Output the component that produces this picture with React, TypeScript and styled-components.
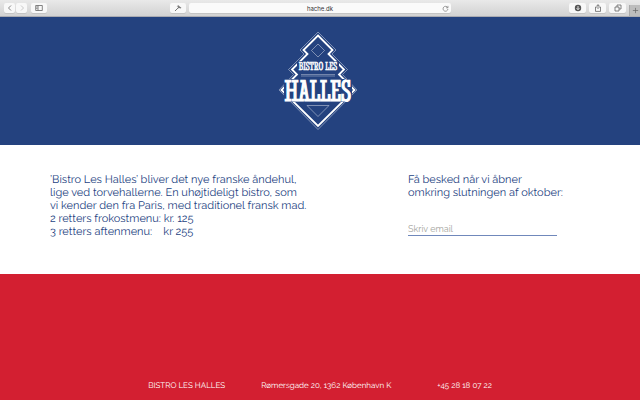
import React from "react";
import styled, { createGlobalStyle } from "styled-components";

const navy = "#24427f";
const sans = `Raleway, Lato, "Open Sans", sans-serif`;

const GlobalStyle = createGlobalStyle`
  * { box-sizing: border-box; }
  body { margin: 0; background: #fff; font-family: ${sans}; text-rendering: geometricPrecision; }
  p { margin: 0; }
`;

const Page = styled.div`
  min-height: 100vh;
  display: flex;
  flex-direction: column;
`;

const Toolbar = styled.header`
  height: 17px;
  display: grid;
  grid-template-columns: 1fr 262px 1fr;
  column-gap: 3px;
  align-items: center;
  background: linear-gradient(#e9e9e9, #d2d2d2);
  border-bottom: 1px solid #aaabb2;
`;

const ToolGroup = styled.div<{ $side: "left" | "right" }>`
  display: flex;
  align-items: center;
  justify-content: space-between;
  height: 100%;
  padding-left: ${(p) => (p.$side === "left" ? "4px" : "0")};
`;

const Buttons = styled.div<{ $gap: number; $push?: boolean }>`
  display: flex;
  align-items: center;
  gap: ${(p) => p.$gap}px;
  margin-left: ${(p) => (p.$push ? "auto" : "0")};
`;

const ToolButton = styled.button<{ $width: number }>`
  width: ${(p) => p.$width}px;
  height: 10px;
  padding: 0;
  border: 0;
  border-radius: 2px;
  background: #f8f8f8;
  box-shadow: 0 1px 0 #c4c4c4;
  color: #666;
  display: grid;
  place-items: center;
  &:disabled { color: #bbb; }
  svg { display: block; }
`;

const NewTab = styled.button`
  align-self: end;
  width: 11px;
  height: 11px;
  margin-left: 3px;
  padding: 0;
  border: 0;
  border-left: 1px solid #aaa;
  background: #bdbdbd;
  color: #666;
  display: grid;
  place-items: center;
`;

const AddressBar = styled.div`
  height: 10px;
  display: grid;
  grid-template-columns: 12px 1fr 12px;
  align-items: center;
  background: #fafafa;
  border-radius: 2px;
  box-shadow: 0 1px 0 #c4c4c4;
`;

const Address = styled.input`
  grid-column: 2;
  width: 100%;
  height: 10px;
  padding: 1px 0 0;
  border: 0;
  outline: 0;
  background: transparent;
  color: #333;
  text-align: center;
  font: 6px/9px Inter, sans-serif;
`;

const Reload = styled.button`
  height: 10px;
  padding: 0;
  border: 0;
  background: transparent;
  color: #777;
  display: grid;
  place-items: center;
`;

const Hero = styled.section`
  display: flex;
  justify-content: center;
  padding: 12px 0 10px;
  background: ${navy};
`;

const Info = styled.main`
  display: grid;
  grid-template-columns: 358fr 182fr;
  padding: 28px 50px 36px;
  background: #fff;
  color: ${navy};
  font-size: 11px;
  line-height: 13px;
`;

const Copy = styled.p`
  white-space: pre-wrap;
`;

const Signup = styled.form`
  display: flex;
  flex-direction: column;
  align-items: flex-start;
  gap: 17px;
`;

const SignupLabel = styled.label`
  white-space: nowrap;
`;

const Email = styled.input`
  width: 149px;
  height: 20px;
  padding: 6px 0 0;
  border: 0;
  border-bottom: 1px solid #7088bb;
  border-radius: 0;
  outline: 0;
  background: transparent;
  color: ${navy};
  font: 9px/13px ${sans};
  &::placeholder { color: #a5a5a0; opacity: 1; }
`;

const Footer = styled.footer`
  flex: 1;
  display: flex;
  align-items: flex-end;
  justify-content: center;
  gap: 36px;
  padding: 80px 0 9px;
  background: #d31f31;
  color: #fff;
  font-size: 8px;
  line-height: 11px;
`;

const FooterItem = styled.span`
  white-space: nowrap;
`;

const Phone = styled.a`
  margin-left: 10px;
  color: inherit;
  text-decoration: none;
  white-space: nowrap;
`;

const Brand = styled.text<{ $size: number; $weight: number }>`
  font-family: "Stint Ultra Condensed", "Liberation Serif", serif;
  font-size: ${(p) => p.$size}px;
  fill: #fff;
  stroke: #fff;
  stroke-width: ${(p) => p.$weight};
  text-anchor: middle;
`;

function Logo() {
  return (
    <svg width="86" height="106" viewBox="277 29 86 106" role="img" aria-label="Bistro Les Halles">
      <g fill="none" stroke="#fff">
        <path
          d="M318 35.500 L332.500 50 L328.500 54 L340.500 66 L344 69.500 L339 74.500 L354.500 90 L318 126 L281.500 90 L297 74.500 L292 69.500 L307.500 54 L303.500 50 Z"
          strokeWidth="1.8"
        />
        <path
          d="M318 32 L336 50 L332 54 L347.500 69.500 L342.500 74.500 L357 90 L318 129.500 L279 90 L293.500 74.500 L288.500 69.500 L304 54 L300 50 Z"
          strokeWidth="0.7"
          opacity="0.6"
        />
        <path d="M318 44 L324.500 50.500 L318 57 L311.500 50.500 Z" strokeWidth="0.7" opacity="0.6" />
        <path d="M301 74.500 H335 M301 76 H335" strokeWidth="0.6" opacity="0.6" />
        <path d="M307 105.500 H329 L318 116.500 Z" strokeWidth="0.7" opacity="0.6" />
      </g>
      <path d="M297 61 H339 V71 H297 Z M284 79 H352 V102 H284 Z" fill={navy} />
      <Brand $size={12} $weight={0.4} x="318" y="70">BISTRO LES</Brand>
      <Brand $size={31} $weight={1} x="318" y="101">HALLES</Brand>
    </svg>
  );
}

type IconProps = { d: string; size?: number };
function Icon({ d, size = 8 }: IconProps) {
  return (
    <svg width={size} height={size} viewBox="0 0 8 8" fill="none" stroke="currentColor" strokeWidth="0.8" aria-hidden="true">
      <path d={d} />
    </svg>
  );
}

export default function App() {
  return (
    <>
      <GlobalStyle />
      <Page>
        <Toolbar>
          <ToolGroup $side="left">
            <Buttons $gap={4}>
              <Buttons $gap={1}>
                <ToolButton $width={11} aria-label="Back"><Icon d="M5 1.500 L2.500 4 L5 6.500" /></ToolButton>
                <ToolButton $width={11} aria-label="Forward" disabled><Icon d="M3 1.500 L5.500 4 L3 6.500" /></ToolButton>
              </Buttons>
              <ToolButton $width={16} aria-label="Sidebar"><Icon d="M.7 1.500 H7.300 V6.500 H.7 Z M3 1.500 V6.500 M1.300 3 H2.400 M1.300 4.500 H2.400" /></ToolButton>
            </Buttons>
            <ToolButton $width={16} aria-label="Tools">
              <svg width="8" height="8" viewBox="0 0 8 8" aria-hidden="true">
                <path d="M1 7 L4.200 3.800" stroke="#777" strokeWidth="1" />
                <path d="M2.600 2.200 L4.400 1.200 L6 2.800 L7.400 3.800 L6.700 4.600 L5.400 4.100 L4.800 4.600 L3.700 3.500 L4.200 2.800 Z" fill="#777" />
              </svg>
            </ToolButton>
          </ToolGroup>
          <AddressBar>
            <Address aria-label="Address" defaultValue="hache.dk" />
            <Reload aria-label="Reload"><Icon size={7} d="M6.500 3 A2.800 2.800 0 1 0 6.800 4.500 M6.800 1 V3.200 H4.600" /></Reload>
          </AddressBar>
          <ToolGroup $side="right">
            <Buttons $gap={3} $push>
              <ToolButton $width={17} aria-label="Downloads">
                <svg width="8" height="8" viewBox="0 0 8 8" aria-hidden="true">
                  <circle cx="4" cy="4" r="3.200" fill="#555" />
                  <path d="M4 2 V5.500 M2.600 4.200 L4 5.700 L5.400 4.200" fill="none" stroke="#fff" strokeWidth="0.8" />
                </svg>
              </ToolButton>
              <ToolButton $width={17} aria-label="Share"><Icon d="M3 3 H1.500 V7.400 H6.500 V3 H5 M4 5 V.7 M2.700 2 L4 .7 L5.300 2" /></ToolButton>
              <ToolButton $width={17} aria-label="Tabs"><Icon d="M1 3 H5 V7 H1 Z M3 3 V1 H7 V5 H5" /></ToolButton>
            </Buttons>
            <NewTab aria-label="New tab"><Icon size={7} d="M4 1 V7 M1 4 H7" /></NewTab>
          </ToolGroup>
        </Toolbar>
        <Hero><Logo /></Hero>
        <Info>
          <Copy>
            {"’Bistro Les Halles’ bliver det nye franske åndehul,\nlige ved torvehallerne. En uhøjtideligt bistro, som\nvi kender den fra Paris, med traditionel fransk mad.\n2 retters frokostmenu: kr. 125\n3 retters aftenmenu:    kr 255"}
          </Copy>
          <Signup>
            <SignupLabel htmlFor="email">
              Få besked når vi åbner<br />omkring slutningen af oktober:
            </SignupLabel>
            <Email id="email" type="email" placeholder="Skriv email" />
          </Signup>
        </Info>
        <Footer>
          <FooterItem>BISTRO LES HALLES</FooterItem>
          <FooterItem>Rømersgade 20, 1362 København K</FooterItem>
          <Phone href="tel:+4528180722">+45 28 18 07 22</Phone>
        </Footer>
      </Page>
    </>
  );
}
